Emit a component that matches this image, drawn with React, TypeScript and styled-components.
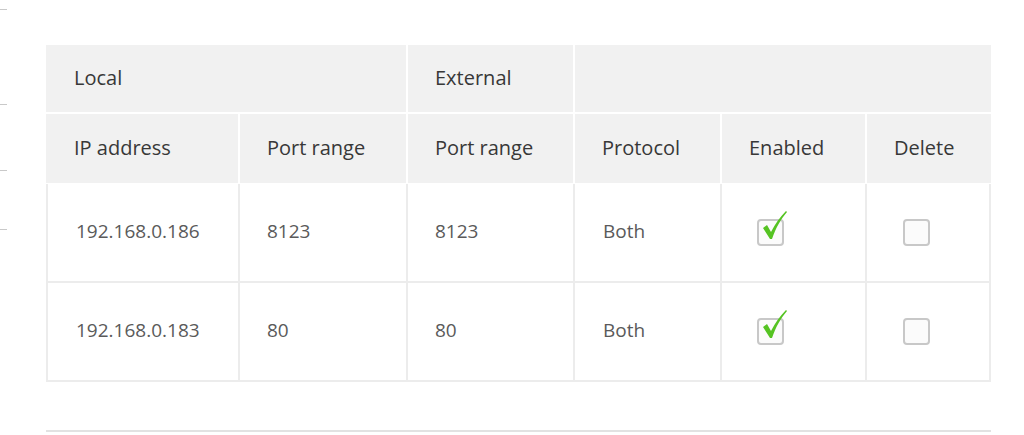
import React from "react";
import styled, { createGlobalStyle } from "styled-components";

const Global = createGlobalStyle`
  html, body { margin: 0; padding: 0; background: #fff; }
  body { font-family: "Open Sans", "Liberation Sans", sans-serif; }
`;

const Page = styled.div`
  position: relative;
  width: 1024px;
  height: 435px;
  overflow: hidden;
  background: #fff;
`;

const Tick = styled.div<{ $top: number }>`
  position: absolute;
  left: 0;
  top: ${(p) => p.$top}px;
  width: 7px;
  height: 1px;
  background: #c9c9c9;
`;

const Content = styled.div`
  padding: 45px 0 0 46px;
  width: 945px;
`;

const COLS = "192px 166px 165px 145px 143px 124px";

const HeadGrid = styled.div`
  display: grid;
  grid-template-columns: ${COLS};
  grid-template-rows: 67px 69px;
  gap: 2px;
  background: #fff;
  padding-bottom: 1px;
`;

const HeadCell = styled.div<{ $span?: number; $pad?: number }>`
  grid-column: span ${(p) => p.$span ?? 1};
  background: #f1f1f1;
  display: flex;
  align-items: center;
  padding-left: ${(p) => p.$pad ?? 27}px;
  padding-bottom: 3px;
  font-size: 20px;
  color: #383838;
`;

const BodyGrid = styled.div`
  display: grid;
  grid-auto-rows: 97px;
  gap: 2px;
  background: #ececec;
  border: 2px solid #ececec;
  border-top: 0;
  width: 945px;
  box-sizing: border-box;
  grid-template-columns: 190px 166px 165px 145px 143px 122px;
`;

const BodyCell = styled.div<{ $pad?: number }>`
  background: #fff;
  display: flex;
  align-items: center;
  padding-left: ${(p) => p.$pad ?? 28}px;
  padding-bottom: 3px;
  font-size: 19px;
  color: #5a5a5a;
`;

const Box = styled.span`
  position: relative;
  display: inline-block;
  width: 23px;
  height: 23px;
  border: 2px solid #c8c8c8;
  border-radius: 4px;
  background: #fbfbfb;
  margin-top: 2px;
`;

const Check = styled.svg`
  position: absolute;
  left: 3px;
  top: -10px;
  width: 26px;
  height: 30px;
  overflow: visible;
`;

const BottomLine = styled.div`
  margin-top: 48px;
  height: 2px;
  background: #e2e2e2;
  width: 945px;
`;

function Checkbox({ checked }: { checked: boolean }) {
  return (
    <Box>
      {checked && (
        <Check viewBox="0 0 26 30">
          <path
            d="M1 17 L5 14 L9 21 C13 13 18 6 24 0 L25 1 C19 8 14 16 10 28 L8 28 Z"
            fill="#55c322"
          />
        </Check>
      )}
    </Box>
  );
}

const rows = [
  { ip: "192.168.0.186", local: "8123", ext: "8123", proto: "Both" },
  { ip: "192.168.0.183", local: "80", ext: "80", proto: "Both" },
];

export default function App() {
  return (
    <Page>
      <Global />
      <Tick $top={9} />
      <Tick $top={104} />
      <Tick $top={170} />
      <Tick $top={229} />
      <Content>
        <HeadGrid>
          <HeadCell $span={2} $pad={28}>Local</HeadCell>
          <HeadCell>External</HeadCell>
          <HeadCell $span={3} />
          <HeadCell $pad={28}>IP address</HeadCell>
          <HeadCell>Port range</HeadCell>
          <HeadCell>Port range</HeadCell>
          <HeadCell>Protocol</HeadCell>
          <HeadCell>Enabled</HeadCell>
          <HeadCell>Delete</HeadCell>
        </HeadGrid>
        <BodyGrid>
          {rows.map((r) => (
            <React.Fragment key={r.ip}>
              <BodyCell>{r.ip}</BodyCell>
              <BodyCell $pad={27}>{r.local}</BodyCell>
              <BodyCell $pad={27}>{r.ext}</BodyCell>
              <BodyCell $pad={28}>{r.proto}</BodyCell>
              <BodyCell $pad={35}>
                <Checkbox checked />
              </BodyCell>
              <BodyCell $pad={36}>
                <Checkbox checked={false} />
              </BodyCell>
            </React.Fragment>
          ))}
        </BodyGrid>
        <BottomLine />
      </Content>
    </Page>
  );
}
